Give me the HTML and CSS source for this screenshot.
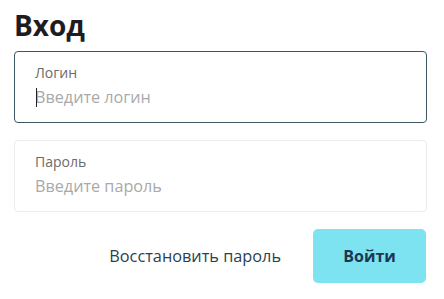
FILE: index.html
```html
<!DOCTYPE html>
<html lang="ru">

<head>
  <meta charset="UTF-8">
  <meta name="viewport" content="width=device-width, initial-scale=1.0">
  <title>Вход</title>
  <link rel="stylesheet" href="styles.css">
</head>

<body>
  <div class="login">
    <h1 class="login-title">Вход</h1>

    <label class="field field-active">
      <span class="field-label">Логин</span>
      <span class="field-input">
        <span class="caret"></span>
        <input type="text" placeholder="Введите логин">
      </span>
    </label>

    <label class="field">
      <span class="field-label">Пароль</span>
      <span class="field-input">
        <input type="password" placeholder="Введите пароль">
      </span>
    </label>

    <div class="login-actions">
      <a href="#" class="restore-link">Восстановить пароль</a>
      <button class="login-button">Войти</button>
    </div>
  </div>
</body>

</html>
```

FILE: styles.css
```css
* {
  margin: 0;
  padding: 0;
  box-sizing: border-box;
  font-family: "Open Sans", "Noto Sans", sans-serif;
}

body {
  background-color: white;
}

.login {
  padding: 6px 17px 0 14px;
  display: flex;
  flex-direction: column;
}

.login-title {
  font-size: 28px;
  font-weight: bold;
  color: #1d1d1f;
  line-height: 38px;
  margin-bottom: 7px;
}

.field {
  display: flex;
  flex-direction: column;
  height: 72px;
  border: 1px solid #ececec;
  border-radius: 4px;
  padding: 12px 20px 0 20px;
  margin-bottom: 17px;
}

.field-active {
  border-color: #3b5863;
}

.field-label {
  font-size: 14px;
  color: #6b6b6b;
  line-height: 18px;
}

.field-input {
  display: flex;
  align-items: center;
  margin-top: 3px;
  position: relative;
}

.field-input input {
  border: none;
  outline: none;
  font-size: 16.2px;
  line-height: 24px;
  width: 100%;
  color: #333;
  background: transparent;
}

.field-input input::placeholder {
  color: #a9a9a9;
}

.caret {
  position: absolute;
  left: 1px;
  top: 3px;
  width: 1px;
  height: 19px;
  background-color: #222;
}

.login-actions {
  display: flex;
  justify-content: flex-end;
  align-items: center;
  gap: 32px;
  padding-right: 1px;
}

.restore-link {
  font-size: 16.3px;
  color: #2b3f51;
  text-decoration: none;
}

.login-button {
  width: 113px;
  height: 54px;
  border: none;
  border-radius: 5px;
  background-color: #7de3f0;
  color: #1c3850;
  font-size: 16px;
  font-weight: bold;
  cursor: pointer;
}
```
